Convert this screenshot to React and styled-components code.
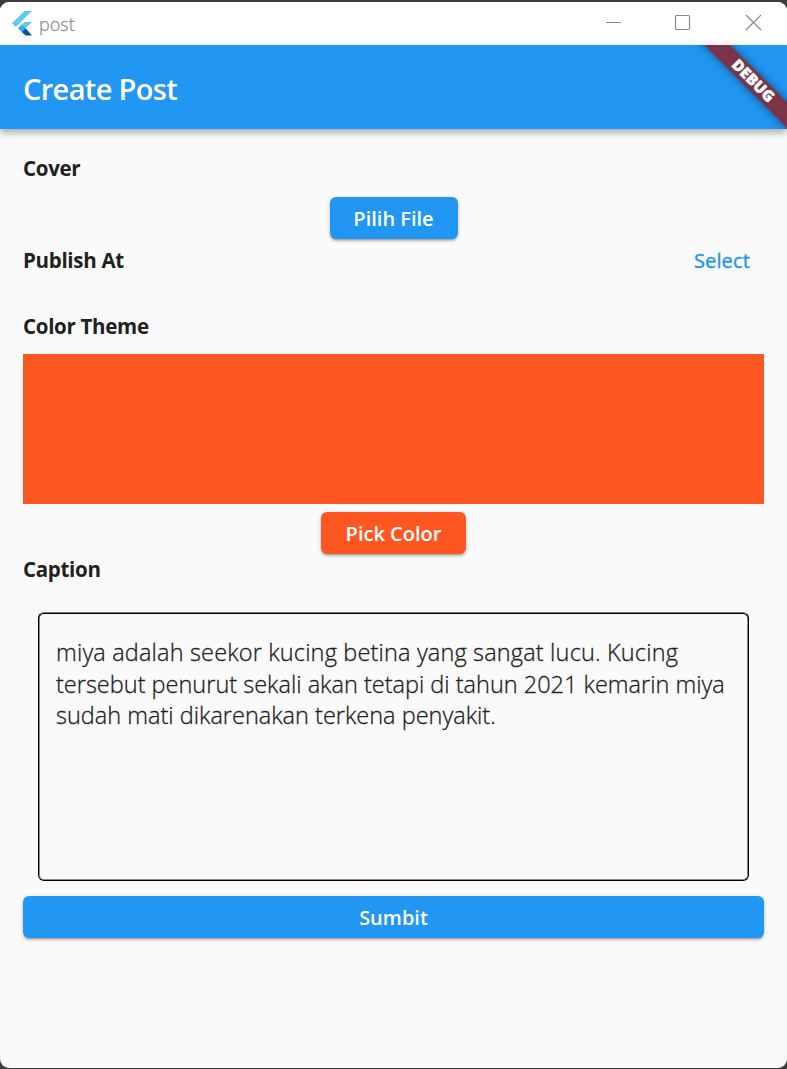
import React from "react";
import styled, { createGlobalStyle } from "styled-components";

const Global = createGlobalStyle`
  * { box-sizing: border-box; }
  html, body { margin: 0; padding: 0; }
  body {
    background: #3c3c3d;
    font-family: "Open Sans", "Noto Sans", "Liberation Sans", sans-serif;
    color: #212121;
  }
  button { font-family: inherit; border: 0; }
`;

const Backdrop = styled.div`
  height: 1069px;
  padding: 2px 0 1px;
  overflow: hidden;
  background: #3c3c3d;
`;

const Window = styled.div`
  display: flex;
  flex-direction: column;
  height: 1066px;
  overflow: hidden;
  border-radius: 9px;
  background: #fafafa;
`;

const TitleBar = styled.header`
  display: flex;
  align-items: center;
  flex: 0 0 43px;
  padding-left: 12px;
  background: #fff;
`;

const WindowTitle = styled.span`
  flex: 1;
  margin-left: 7px;
  font-size: 18px;
  font-weight: 300;
  line-height: 24px;
  color: #8f8f8f;
  -webkit-text-stroke: 0.3px currentColor;
`;

const WindowControls = styled.div`
  display: flex;
  svg { display: block; width: 70px; height: 43px; }
`;

const AppBar = styled.div`
  position: relative;
  z-index: 1;
  display: flex;
  align-items: center;
  flex: 0 0 84px;
  padding: 4px 23px 0;
  background: #2196f3;
  box-shadow: 0 3px 6px -1px rgba(0,0,0,.2), 0 6px 7px rgba(0,0,0,.1), 0 1px 12px rgba(0,0,0,.1);
`;

const Title = styled.h1`
  margin: 0;
  font-size: 29px;
  font-weight: 600;
  line-height: 40px;
  letter-spacing: -0.65px;
  color: #fff;
`;

const RibbonCorner = styled.div`
  position: absolute;
  top: 0;
  right: 0;
  width: 100px;
  height: 84px;
  overflow: hidden;
`;

const Ribbon = styled.div`
  position: absolute;
  top: 27px;
  left: -9px;
  width: 150px;
  height: 18px;
  transform: rotate(45deg);
  background: #7b3347;
  color: #fff;
  font-size: 15.3px;
  font-weight: 800;
  line-height: 17px;
  text-align: center;
  -webkit-text-stroke: 0.4px #fff;
  box-shadow: 0 0 9px rgba(0,0,0,.5);
`;

const Body = styled.main`
  display: flex;
  flex-direction: column;
  padding: 23px 23px 0;
`;

const Label = styled.h2`
  margin: 0;
  font-size: 20.5px;
  font-weight: 700;
  line-height: 32px;
  letter-spacing: -0.3px;
`;

const CoverField = styled.section`
  display: flex;
  flex-direction: column;
  gap: 13px;
`;

const Row = styled.div`
  display: flex;
  align-items: center;
  justify-content: space-between;
  height: 42px;
  margin-bottom: 29px;
`;

const Button = styled.button`
  align-self: ${(p) => (p.$wide ? "stretch" : "center")};
  width: ${(p) => (p.$wide ? "auto" : p.$width + "px")};
  height: 42px;
  padding: 1px 0 0;
  border-radius: 6px;
  background: ${(p) => p.$color};
  color: #fff;
  font-size: 20px;
  font-weight: 600;
  line-height: 40px;
  box-shadow: 0 3px 2px -2px rgba(0,0,0,.2), 0 2px 3px rgba(0,0,0,.16), 0 1px 5px rgba(0,0,0,.12);
`;

const TextButton = styled.button`
  padding: 1px 0 0;
  margin-right: 14px;
  background: none;
  color: #2196f3;
  font-size: 20px;
  font-weight: 400;
  line-height: 42px;
  letter-spacing: 0.15px;
  -webkit-text-stroke: 0.4px currentColor;
`;

const Swatch = styled.div`
  height: 150px;
  margin: 12px 0 8px;
  background: #ff5722;
`;

const CaptionField = styled.section`
  display: flex;
  flex-direction: column;
  margin-top: -1px;
`;

const CaptionBox = styled.div`
  height: 269px;
  margin: 27px 15px 15px;
  padding: 24px 17px;
  border: 1px solid #000;
  border-top-color: #777;
  border-radius: 6px;
  box-shadow: inset 0 1px 0 #000, inset 0 0 0 1px rgba(0,0,0,.45);
  font-size: 23.5px;
  font-weight: 300;
  line-height: 31.5px;
  white-space: nowrap;
  -webkit-text-stroke: 0.3px currentColor;
`;

const Line = styled.div`
  letter-spacing: ${(p) => p.$spacing || 0}px;
`;

export default function App() {
  return (
    <Backdrop>
      <Global />
      <Window>
        <TitleBar>
          <svg width="20" height="25" viewBox="0 0 20 25">
            <path d="M12.5 0H20L3.7 16 0 12.3z" fill="#5fc9f8" />
            <path d="M12.5 11H20L9.7 21 6 17.2z" fill="#5fc9f8" />
            <path d="M6 17.2l3.8-3.7 3.8 3.7-3.8 3.8z" fill="#35b1ee" />
            <path d="M9.8 21l3.8-3.8L20 24.5h-6.5z" fill="#01579b" />
          </svg>
          <WindowTitle>post</WindowTitle>
          <WindowControls>
            <svg viewBox="0 0 70 43"><path d="M29 20.5h15" stroke="#8a8a8a" /></svg>
            <svg viewBox="0 0 70 43"><rect x="28.5" y="13.5" width="14" height="14" rx="1" stroke="#8a8a8a" strokeWidth="1.2" fill="none" /></svg>
            <svg viewBox="0 0 70 43"><path d="M29 13l15 15M44 13L29 28" stroke="#8a8a8a" strokeWidth="1.2" /></svg>
          </WindowControls>
        </TitleBar>
        <AppBar>
          <Title>Create Post</Title>
          <RibbonCorner><Ribbon>DEBUG</Ribbon></RibbonCorner>
        </AppBar>
        <Body>
          <CoverField>
            <Label>Cover</Label>
            <Button $color="#2196f3" $width={128}>Pilih File</Button>
          </CoverField>
          <Row>
            <Label>Publish At</Label>
            <TextButton>Select</TextButton>
          </Row>
          <Label>Color Theme</Label>
          <Swatch />
          <Button $color="#ff5722" $width={145}>Pick Color</Button>
          <CaptionField>
            <Label>Caption</Label>
            <CaptionBox>
              <Line $spacing={0.16}>miya adalah seekor kucing betina yang sangat lucu. Kucing</Line>
              <Line>tersebut penurut sekali akan tetapi di tahun 2021 kemarin miya</Line>
              <Line>sudah mati dikarenakan terkena penyakit.</Line>
            </CaptionBox>
          </CaptionField>
          <Button $color="#2196f3" $wide>Sumbit</Button>
        </Body>
      </Window>
    </Backdrop>
  );
}
